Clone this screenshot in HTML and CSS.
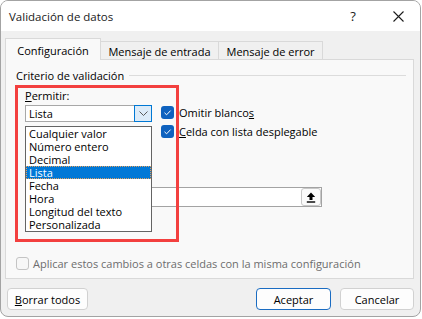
FILE: index.html
```html
<!DOCTYPE html>
<html lang="es">
<head>
<meta charset="utf-8">
<title>Validación de datos</title>
<link rel="stylesheet" href="styles.css">
</head>
<body>
<div class="dialog">
  <div class="titlebar">
    <span class="title">Validación de datos</span>
    <span class="help">?</span>
    <span class="close"><svg width="11" height="11" viewBox="0 0 11 11"><path d="M0.5 0.5 L10.5 10.5 M10.5 0.5 L0.5 10.5" stroke="#1c1c1c" stroke-width="1.1" fill="none"/></svg></span>
  </div>
  <div class="body">
    <div class="tabs">
      <div class="tab active">Configuración</div>
      <div class="tab t2">Mensaje de entrada</div>
      <div class="tab t3">Mensaje de error</div>
    </div>
    <div class="panel">
      <div class="group-head"><span>Criterio de validación</span><span class="rule"></span></div>
      <div class="criteria">
        <div class="lbl"><u>P</u>ermitir:</div>
        <div class="combo-wrap">
          <div class="combo">
            <span class="combo-text">Lista</span>
            <span class="drop"><svg width="9" height="5" viewBox="0 0 9 5"><polyline points="0.5,0.5 4.5,4.5 8.5,0.5" stroke="#5a5a5a" stroke-width="1" fill="none"/></svg></span>
          </div>
          <ul class="listbox">
            <li>Cualquier valor</li>
            <li>Número entero</li>
            <li>Decimal</li>
            <li class="sel">Lista</li>
            <li>Fecha</li>
            <li>Hora</li>
            <li>Longitud del texto</li>
            <li>Personalizada</li>
          </ul>
        </div>
        <div class="checks">
          <div class="check"><span class="box on"><svg width="13" height="13" viewBox="0 0 13 13"><polyline points="3.5,6.8 5.6,8.8 9.6,4.6" stroke="#fff" stroke-width="1" fill="none"/></svg></span><span>Omitir blanco<u>s</u></span></div>
          <div class="check"><span class="box on"><svg width="13" height="13" viewBox="0 0 13 13"><polyline points="3.5,6.8 5.6,8.8 9.6,4.6" stroke="#fff" stroke-width="1" fill="none"/></svg></span><span><u>C</u>elda con lista desplegable</span></div>
        </div>
      </div>
      <div class="source">
        <div class="field">
          <span class="pick"><svg width="10" height="11" viewBox="0 0 10 11"><path d="M5 0.5 L9.2 5 H6.5 V8 H3.5 V5 H0.8 Z" fill="#000"/><rect x="0.8" y="9.3" width="8.4" height="1.4" fill="#000"/></svg></span>
        </div>
      </div>
      <div class="apply"><span class="box off"></span><span>Aplicar estos cambios a otras celdas con la misma configuración</span></div>
    </div>
    <div class="footer">
      <div class="btn b-clear"><span><u>B</u>orrar todos</span></div>
      <div class="btn b-ok">Aceptar</div>
      <div class="btn b-cancel">Cancelar</div>
    </div>
  </div>
  <div class="highlight"></div>
</div>
</body>
</html>
```

FILE: styles.css
```css
* {
  box-sizing: border-box;
  margin: 0;
  padding: 0;
}

html,
body {
  background: #ffffff;
}

body {
  font-family: "Open Sans", "Noto Sans", sans-serif;
  font-size: 11px;
  color: #000;
}

u {
  text-decoration: underline;
  text-underline-offset: 1px;
}

.dialog {
  position: relative;
  width: 421px;
  height: 317px;
  border: 1px solid #a3a3a3;
  border-radius: 8px;
  overflow: hidden;
  background: #f0f0f0;
  display: flex;
  flex-direction: column;
}

.titlebar {
  height: 30px;
  flex: none;
  background: #fff;
  display: flex;
  align-items: center;
  padding-left: 8px;
}

.title {
  flex: 1;
  font-size: 11.5px;
  color: #1a1a1a;
}

.help {
  width: 46px;
  text-align: center;
  font-size: 13px;
  color: #1a1a1a;
}

.close {
  width: 44px;
  display: flex;
  justify-content: center;
}

.body {
  flex: 1;
  padding: 7px 6px 0 4px;
  display: flex;
  flex-direction: column;
}

.tabs {
  display: flex;
  align-items: flex-end;
  height: 21px;
  flex: none;
}

.tab {
  height: 18px;
  border: 1px solid #d9d9d9;
  border-bottom: none;
  background: #f0f0f0;
  display: flex;
  align-items: center;
  justify-content: center;
  padding-top: 2px;
  margin-left: -1px;
}

.tab.active {
  width: 96px;
  height: 22px;
  margin: 0 0 -1px 0;
  background: #f9f9f9;
  position: relative;
  z-index: 1;
}

.t2 {
  width: 119px;
}

.t3 {
  width: 105px;
}

.panel {
  height: 220px;
  flex: none;
  border: 1px solid #d9d9d9;
  background: #f9f9f9;
  display: flex;
  flex-direction: column;
  padding: 8px 7px 0 10px;
}

.group-head {
  display: flex;
  align-items: center;
  height: 15px;
  line-height: 15px;
  gap: 5px;
}

.rule {
  flex: 1;
  height: 1px;
  background: #dcdcdc;
}

.criteria {
  margin: 6px 0 0 9px;
  display: grid;
  grid-template-columns: 127px auto;
  column-gap: 9px;
  row-gap: 2px;
}

.lbl {
  line-height: 14px;
  height: 14px;
}

.combo-wrap {
  position: relative;
  grid-column: 1;
  height: 17px;
}

.combo {
  height: 17px;
  border: 1px solid #a8a8a8;
  background: #fff;
  display: flex;
  align-items: stretch;
  padding-left: 3px;
}

.combo-text {
  flex: 1;
  line-height: 15px;
}

.drop {
  width: 18px;
  margin: -1px -1px -1px 0;
  border: 1px solid #0078d4;
  background: #dcebf8;
  display: flex;
  align-items: center;
  justify-content: center;
}

.listbox {
  position: absolute;
  top: 21px;
  left: 0;
  width: 127px;
  border: 1px solid #646464;
  background: #fff;
  list-style: none;
  z-index: 2;
}

.listbox li {
  height: 13px;
  line-height: 13px;
  padding-left: 3px;
  white-space: nowrap;
}

.listbox li.sel {
  background: #0078d7;
  color: #fff;
  outline: 1px dotted #e0a060;
  outline-offset: -1px;
}

.checks {
  grid-column: 2;
  grid-row: 2;
  display: flex;
  flex-direction: column;
  gap: 4px;
}

.check {
  display: flex;
  align-items: center;
  height: 15px;
  gap: 5px;
  white-space: nowrap;
}

.box {
  width: 13px;
  height: 13px;
  border-radius: 3px;
  flex: none;
  display: flex;
}

.box.on {
  background: #0f62bf;
}

.box.off {
  border: 1px solid #c4c4c4;
  background: #f7f7f7;
}

.source {
  margin: 48px 0 0 9px;
  display: flex;
  flex-direction: column;
}

.field {
  width: 297px;
  height: 20px;
  border: 1px solid #a3a3a3;
  background: #fff;
  display: flex;
  justify-content: flex-end;
}

.pick {
  width: 20px;
  height: 18px;
  border: 1px solid #c8c8c8;
  border-radius: 3px;
  background: #fbfbfb;
  display: flex;
  align-items: center;
  justify-content: center;
}

.apply {
  margin-top: auto;
  margin-bottom: 8px;
  display: flex;
  align-items: center;
  gap: 4px;
  height: 13px;
  color: #6d6d6d;
  white-space: nowrap;
}

.footer {
  display: flex;
  margin-top: 9px;
  padding-left: 2px;
}

.btn {
  height: 22px;
  border: 1px solid #d1d1d1;
  border-radius: 4px;
  background: #fdfdfd;
  display: flex;
  align-items: center;
  justify-content: center;
}

.b-clear {
  width: 81px;
}

.b-ok {
  width: 75px;
  margin-left: auto;
  border-color: #1a6cc2;
}

.b-cancel {
  width: 74px;
  margin-left: 9px;
}

.highlight {
  position: absolute;
  left: 14px;
  top: 84px;
  width: 164px;
  height: 157px;
  border: 3px solid #f3403f;
  z-index: 3;
}
```
